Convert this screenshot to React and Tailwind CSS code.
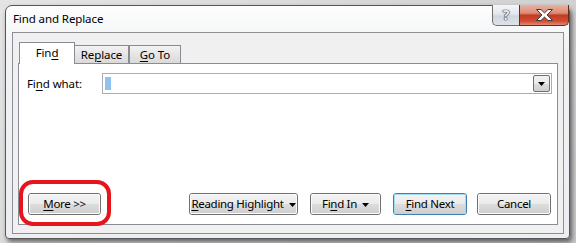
import React from "react";

function Arrow() {
  return (
    <svg width="7" height="4" viewBox="0 0 7 4" className="ml-[5px] mt-[1px] shrink-0">
      <path d="M0 0h7L3.5 4z" fill="#000" />
    </svg>
  );
}

function U({ children }) {
  return <span className="underline underline-offset-[2px] decoration-[1px]">{children}</span>;
}

function Btn({ children, w, def }) {
  return (
    <div
      className={`h-[22px] ${w} rounded-[3px] border ${
        def ? "border-[#3c7fb1]" : "border-[#707070]"
      } shrink-0`}
    >
      <div
        className={`h-full w-full rounded-[2px] border ${
          def ? "border-[#a6dcf3]" : "border-[#fbfbfb]"
        } bg-[linear-gradient(#f2f2f2_0%,#ebebeb_48%,#dddddd_52%,#cfcfcf_100%)] flex items-center justify-center whitespace-nowrap text-[11.5px] tracking-[-0.3px] leading-none text-black`}
      >
        {children}
      </div>
    </div>
  );
}

export default function App() {
  return (
    <div className="w-[576px] h-[243px] bg-[linear-gradient(135deg,#e4e4e4,#c9c9c9)] overflow-hidden font-['Noto_Sans',sans-serif] text-black">
      <div className="ml-[5px] mt-[5px] w-[565px] h-[234px] border border-[#575757] rounded-t-[7px] rounded-b-[4px] bg-[linear-gradient(#fdfdfd_0%,#f1f2f4_20%,#eceef1_100%)] shadow-[2px_3px_5px_rgba(0,0,0,0.55)] flex flex-col">
        {/* Title bar */}
        <div className="h-[26px] flex items-start shrink-0">
          <div className="pl-[7px] pt-[5px] text-[11.5px] tracking-[-0.1px] leading-[16px] text-[#000] whitespace-nowrap">Find and Replace</div>
          <div className="ml-auto -mt-px flex">
            <div className="w-[27px] h-[21px] border border-[#6f6f6f] border-t-0 border-r-0 rounded-bl-[5px] bg-[linear-gradient(#f4f5f7_0%,#e3e7ec_45%,#cfd5dc_55%,#dfe4ea_100%)] flex items-center justify-center">
              <span className="text-[14px] font-bold leading-none text-[#e8ecf0] [text-shadow:0_0_1px_#2e3440,0_0_1px_#2e3440,0_0_1px_#2e3440]">?</span>
            </div>
            <div className="w-[50px] h-[21px] border border-[#6a2a20] border-t-0 rounded-br-[5px] bg-[linear-gradient(#eab0a1_0%,#dc8c76_40%,#c33c22_52%,#cf4d33_80%,#e48a70_100%)] flex items-center justify-center">
              <svg width="17" height="12" viewBox="-0.5 -0.5 17 12">
                <polygon
                  points="0,0 4.5,0 8,3.4 11.5,0 16,0 10.6,5.5 16,11 11.5,11 8,7.6 4.5,11 0,11 5.4,5.5"
                  fill="#ffffff"
                  stroke="#3b3b3b"
                  strokeWidth="1"
                  strokeLinejoin="round"
                />
              </svg>
            </div>
          </div>
        </div>

        {/* Client area */}
        <div className="ml-[6px] mr-[5px] h-[202px] border border-[#8d8f94] bg-[#f0f0f0] flex flex-col pt-[9px]">
          {/* Tabs */}
          <div className="h-[21px] flex items-end pl-[6px] text-[11.5px] tracking-[-0.1px] leading-none">
            <div className="relative z-10 w-[56px] h-[22px] -mb-px border border-b-0 border-[#898c95] bg-white flex items-center justify-center pb-[2px]">
              Fin<U>d</U>
            </div>
            <div className="w-[54px] h-[18px] border border-l-0 border-b-0 border-[#898c95] bg-[linear-gradient(#f3f3f3,#e5e5e5_50%,#dadada)] flex items-center justify-center">
              Re<U>p</U>lace
            </div>
            <div className="w-[52px] h-[18px] border border-b-0 border-[#898c95] bg-[linear-gradient(#f3f3f3,#e5e5e5_50%,#dadada)] flex items-center justify-center">
              <U>G</U>o To
            </div>
          </div>

          {/* Pane */}
          <div className="mx-[5px] h-[162px] border border-[#898c95] bg-white flex flex-col justify-between">
            <div className="mt-[9px] flex items-center pl-[8px] pr-[5px]">
              <div className="w-[75px] text-[11.5px] tracking-[-0.1px] leading-none whitespace-nowrap">
                Fi<U>n</U>d what:
              </div>
              <div className="flex-1 h-[21px] border border-[#abadb3] flex items-center">
                <div className="ml-[2px] w-[6px] h-[13px] bg-[#8fc1f1]" />
                <div className="ml-auto mr-px w-[17px] h-[17px] border border-[#707070] rounded-[2px] bg-[linear-gradient(#f2f2f2,#ebebeb_50%,#dddddd_50%,#cfcfcf)] flex items-center justify-center">
                  <svg width="7" height="4" viewBox="0 0 7 4">
                    <path d="M0 0h7L3.5 4z" fill="#000" />
                  </svg>
                </div>
              </div>
            </div>

            <div className="mb-[9px] flex items-center pl-[9px] pr-[6px]">
              <div className="relative">
                <Btn w="w-[73px]">
                  <U>M</U>ore &gt;&gt;
                </Btn>
                <div className="absolute left-[-9px] top-[-13px] w-[92px] h-[46px] border-[4px] border-[#e8141c] rounded-[14px]" />
              </div>
              <div className="ml-auto flex items-center">
                <Btn w="w-[109px]">
                  <U>R</U>eading Highlight
                  <Arrow />
                </Btn>
                <div className="w-[12px]" />
                <Btn w="w-[71px]">
                  Fi<U>n</U>d In
                  <Arrow />
                </Btn>
                <div className="w-[12px]" />
                <Btn w="w-[74px]" def>
                  <U>F</U>ind Next
                </Btn>
                <div className="w-[10px]" />
                <Btn w="w-[74px]">Cancel</Btn>
              </div>
            </div>
          </div>
        </div>
      </div>
    </div>
  );
}
